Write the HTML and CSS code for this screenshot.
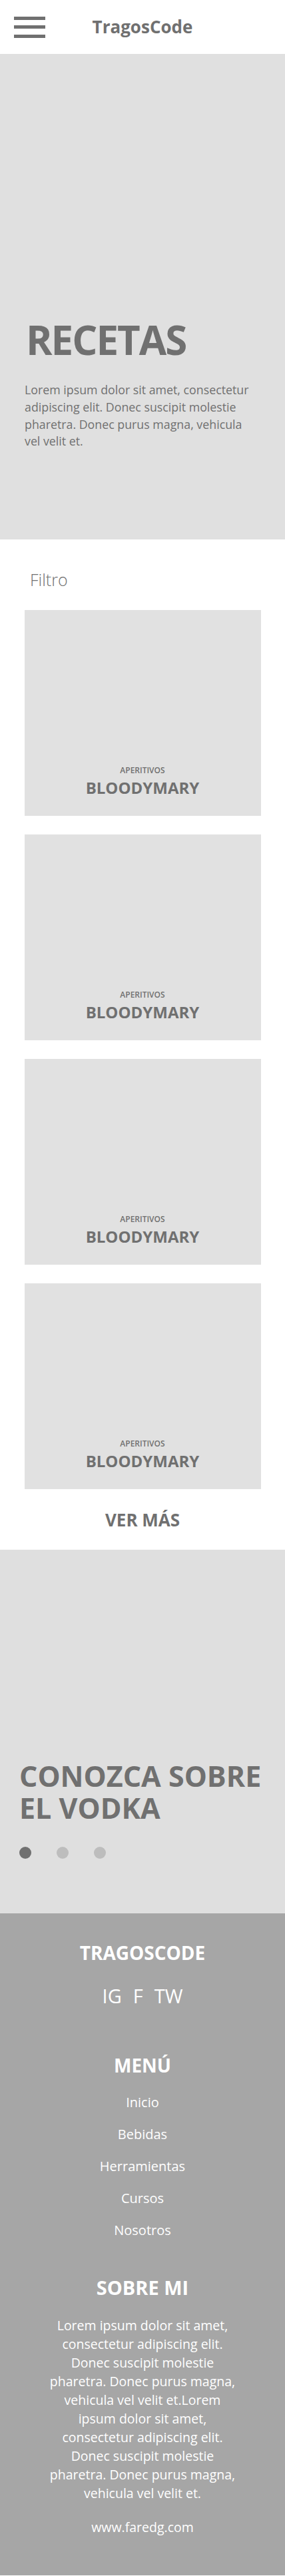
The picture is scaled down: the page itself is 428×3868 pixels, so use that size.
FILE: index.html
```html
<!DOCTYPE html>
<html lang="es">
<head>
  <meta charset="UTF-8" />
  <meta name="viewport" content="width=device-width, initial-scale=1.0"/>
  <title>TragosCode</title>
  <link rel="stylesheet" href="styles.css">
</head>
<body>
  <header class="topbar">
    <button class="menu-btn" aria-label="Menú">
      <span></span><span></span><span></span>
    </button>
    <span class="brand">TragosCode</span>
  </header>

  <section class="hero">
    <h1 class="hero-title">RECETAS</h1>
    <p class="hero-text">Lorem ipsum dolor sit amet, consectetur adipiscing elit. Donec suscipit molestie pharetra. Donec purus magna, vehicula vel velit et.</p>
  </section>

  <section class="recipes">
    <p class="filter">Filtro</p>
    <div class="recipe-list">
      <div class="recipe-card">
        <span class="recipe-cat">APERITIVOS</span>
        <span class="recipe-name">BLOODYMARY</span>
      </div>
      <div class="recipe-card">
        <span class="recipe-cat">APERITIVOS</span>
        <span class="recipe-name">BLOODYMARY</span>
      </div>
      <div class="recipe-card">
        <span class="recipe-cat">APERITIVOS</span>
        <span class="recipe-name">BLOODYMARY</span>
      </div>
      <div class="recipe-card">
        <span class="recipe-cat">APERITIVOS</span>
        <span class="recipe-name">BLOODYMARY</span>
      </div>
    </div>
    <a class="more-link" href="#">VER MÁS</a>
  </section>

  <section class="vodka">
    <h2 class="vodka-title">CONOZCA SOBRE EL VODKA</h2>
    <div class="dots">
      <span class="dot active"></span>
      <span class="dot"></span>
      <span class="dot"></span>
    </div>
  </section>

  <footer class="footer">
    <h3 class="footer-brand">TRAGOSCODE</h3>
    <div class="social">
      <a href="#">IG</a>
      <a href="#">F</a>
      <a href="#">TW</a>
    </div>

    <h3 class="footer-title menu-title">MENÚ</h3>
    <ul class="footer-menu">
      <li><a href="#">Inicio</a></li>
      <li><a href="#">Bebidas</a></li>
      <li><a href="#">Herramientas</a></li>
      <li><a href="#">Cursos</a></li>
      <li><a href="#">Nosotros</a></li>
    </ul>

    <h3 class="footer-title about-title">SOBRE MI</h3>
    <p class="about-text">Lorem ipsum dolor sit amet, consectetur adipiscing elit. Donec suscipit molestie pharetra. Donec purus magna, vehicula vel velit et.Lorem ipsum dolor sit amet, consectetur adipiscing elit. Donec suscipit molestie pharetra. Donec purus magna, vehicula vel velit et.</p>
    <a class="site-link" href="#">www.faredg.com</a>
  </footer>
</body>
</html>
```

FILE: styles.css
```css
* {
  box-sizing: border-box;
}
body {
  margin: 0;
  background-color: #fff;
  font-family: 'Open Sans', 'Noto Sans', sans-serif;
  color: #707070;
}
a {
  color: inherit;
  text-decoration: none;
}
h1, h2, h3, p, ul {
  margin: 0;
}

/* header */
.topbar {
  height: 81px;
  display: grid;
  grid-template-columns: 1fr auto 1fr;
  align-items: center;
  padding: 0 21px;
}
.menu-btn {
  width: 47px;
  padding: 0;
  background: none;
  border: none;
  display: flex;
  flex-direction: column;
  gap: 8.5px;
  cursor: pointer;
}
.menu-btn span {
  display: block;
  height: 5px;
  background: #707070;
}
.brand {
  font-size: 26px;
  font-weight: 700;
  padding-bottom: 2px;
}

/* hero */
.hero {
  height: 729px;
  background: #e0e0e0;
  padding: 0 47px 134px 37px;
  display: flex;
  flex-direction: column;
  justify-content: flex-end;
}
.hero-title {
  font-size: 60px;
  line-height: 66px;
  font-weight: 700;
  letter-spacing: -2px;
  padding-left: 2px;
}
.hero-text {
  margin-top: 30px;
  font-size: 17.8px;
  line-height: 25.7px;
}

/* recetas */
.recipes {
  padding: 43px 0 27px;
  display: flex;
  flex-direction: column;
  align-items: center;
}
.filter {
  align-self: flex-start;
  padding-left: 45px;
  font-size: 25px;
  line-height: 34px;
  font-weight: 300;
}
.recipe-list {
  margin-top: 29px;
  display: flex;
  flex-direction: column;
  gap: 28px;
}
.recipe-card {
  width: 355px;
  height: 309px;
  background: #e1e1e1;
  display: flex;
  flex-direction: column;
  justify-content: flex-end;
  align-items: center;
  padding-bottom: 26px;
}
.recipe-cat {
  font-size: 12px;
  line-height: 16px;
  font-weight: 600;
  margin-bottom: 2px;
}
.recipe-name {
  font-size: 24px;
  line-height: 32px;
  font-weight: 700;
}
.more-link {
  margin-top: 28px;
  font-size: 26px;
  line-height: 36px;
  font-weight: 700;
}

/* vodka */
.vodka {
  height: 546px;
  background: #dfdfdf;
  padding: 316px 29px 0;
}
.vodka-title {
  font-size: 43px;
  line-height: 48px;
  font-weight: 700;
  max-width: 370px;
}
.dots {
  margin-top: 34px;
  display: flex;
  gap: 38px;
}
.dot {
  width: 18px;
  height: 18px;
  border-radius: 50%;
  background: #bdbdbd;
}
.dot.active {
  background: #707070;
}

/* footer */
.footer {
  background: #a6a6a6;
  color: #fff;
  text-align: center;
  padding: 40px 0 58px;
  display: flex;
  flex-direction: column;
  align-items: center;
}
.footer-brand {
  font-size: 28px;
  line-height: 38px;
  font-weight: 700;
}
.social {
  margin-top: 27px;
  display: flex;
  gap: 17px;
  font-size: 29px;
  line-height: 38px;
  font-weight: 400;
}
.footer-title {
  font-size: 28px;
  line-height: 38px;
  font-weight: 700;
}
.menu-title {
  margin-top: 66px;
}
.footer-menu {
  margin-top: 13px;
  padding: 0;
  list-style: none;
}
.footer-menu li {
  font-size: 20px;
  line-height: 48px;
}
.about-title {
  margin-top: 43px;
  font-size: 29px;
}
.about-text {
  margin-top: 24px;
  width: 290px;
  font-size: 19.5px;
  line-height: 28px;
}
.site-link {
  margin-top: 23px;
  font-size: 19.5px;
  line-height: 28px;
}
```
